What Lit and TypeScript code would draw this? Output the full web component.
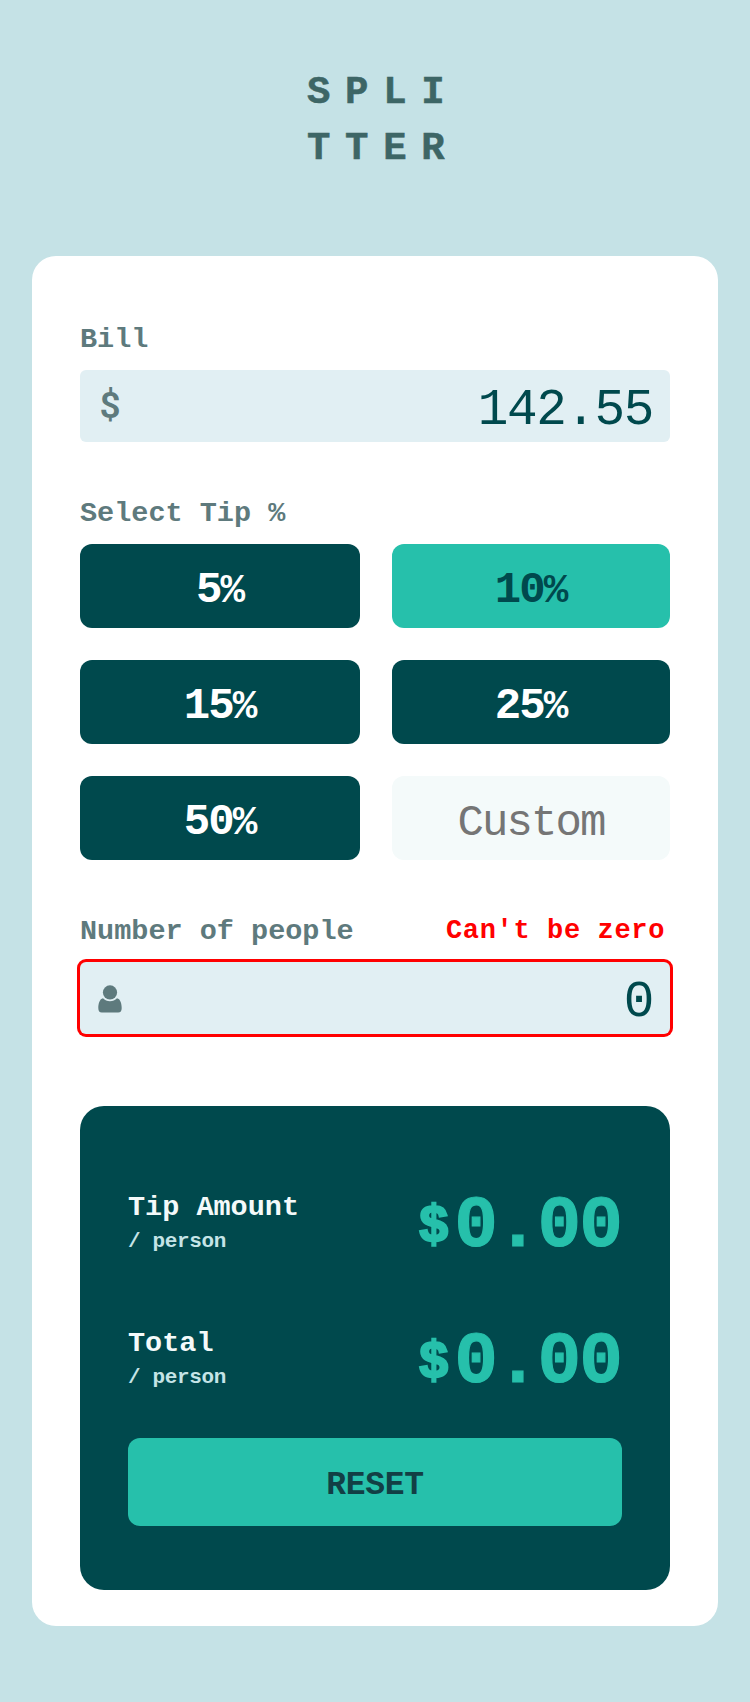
import { LitElement, html, css } from "lit";
import { customElement, property, state } from "lit/decorators.js";
import { classMap } from "lit/directives/class-map.js";

@customElement("result-row")
class ResultRow extends LitElement {
  @property() label = "";
  @property() amount = "0.00";

  static styles = css`
    :host { display: flex; justify-content: space-between; height: 66px; }
    .name { font-size: 28.5px; line-height: 40px; color: #f4fafa; white-space: pre; }
    .unit { font-size: 21px; letter-spacing: -0.36px; line-height: 24px; margin-top: 2px; color: #c5e4e7; }
    .amount {
      display: flex; margin-top: 6px; padding-right: 1px; line-height: 66px; font-size: 72px;
      letter-spacing: -1.6px; color: #26c0ab; -webkit-text-stroke: 1.2px #26c0ab;
    }
    .currency { font-size: 51px; letter-spacing: 0; width: 36px; line-height: 67px; -webkit-text-stroke-width: 2.4px; }
  `;

  render() {
    return html`
      <div>
        <div class="name">${this.label}</div>
        <div class="unit">/ person</div>
      </div>
      <div class="amount"><span class="currency">$</span><span>${this.amount}</span></div>
    `;
  }
}

@customElement("app-root")
class AppRoot extends LitElement {
  @state() private tip = 10;
  @state() private bill = "142.55";
  @state() private people = "0";

  static styles = css`
    :host {
      display: block; min-height: 1702px; box-sizing: border-box; padding: 65px 32px 76px;
      background: #c5e2e6; font-family: "Liberation Mono", monospace; font-weight: 700;
    }
    * { box-sizing: border-box; }
    .logo {
      margin: 0 0 79px; padding-left: 275px; font-size: 39px; line-height: 56px;
      letter-spacing: 14.7px; color: #3d6666; -webkit-text-stroke: 0.5px #3d6666;
    }
    .logo span { display: block; }
    .card { background: #fff; border-radius: 24px; padding: 64px 48px 36px; }
    .head { display: flex; justify-content: space-between; height: 40px; margin-bottom: 10px; }
    .label { font-size: 28.5px; line-height: 40px; color: #5e7a7d; }
    .error { font-size: 27px; line-height: 38px; letter-spacing: 0.64px; color: #f00; padding-right: 5px; }
    .field {
      display: flex; align-items: center; height: 72px; border-radius: 6px;
      background: #e1eff3; padding: 0 17px 0 18px; margin-bottom: 52px;
    }
    .field.invalid { box-shadow: 0 0 0 3px #f00; margin-bottom: 72px; }
    .icon { flex: none; width: 24px; color: #5e7a7d; }
    .dollar { font: 600 37px/72px Roboto, sans-serif; text-align: center; }
    .person { display: block; height: 28px; margin-top: 1px; fill: currentColor; }
    input, button { font-family: inherit; border: 0; outline: 0; margin: 0; min-width: 0; }
    .field input {
      flex: 1; height: 72px; padding: 8px 0 0; background: none; text-align: right;
      font-size: 51px; letter-spacing: -1.4px; color: #00494d;
    }
    .tips { display: grid; grid-template-columns: 280px 278px; gap: 32px; margin-bottom: 52px; }
    .tip {
      height: 84px; border-radius: 12px; padding: 8px 0 0; text-align: center;
      font-size: 44px; font-weight: 700; letter-spacing: -1.9px; color: #fff; background: #00494d;
    }
    .tip.active { background: #26c0ab; color: #00494d; }
    .sign { font-size: 41px; letter-spacing: -1px; }
    .custom { font-weight: 400; background: #f4fafa; width: 100%; padding-top: 10px; }
    .custom::placeholder { color: #757575; opacity: 1; }
    .results { background: #00494d; border-radius: 24px; padding: 82px 48px 64px; }
    .rows { display: grid; gap: 70px; margin-bottom: 48px; }
    .reset {
      display: block; width: 100%; height: 88px; border-radius: 12px; padding: 6px 0 0;
      background: #26c0ab; color: #123f45; font-size: 33px; font-weight: 700; letter-spacing: -0.3px;
    }
  `;

  render() {
    return html`
      <h1 class="logo"><span>SPLI</span><span>TTER</span></h1>
      <main class="card">
        <div class="head"><label class="label">Bill</label></div>
        <div class="field">
          <span class="icon dollar">$</span>
          <input .value=${this.bill} @input=${(e: any) => (this.bill = e.target.value)} />
        </div>

        <div class="head"><span class="label">Select Tip %</span></div>
        <div class="tips">
          ${[5, 10, 15, 25, 50].map(
            (t) => html`<button
              class=${classMap({ tip: true, active: t === this.tip })}
              @click=${() => (this.tip = t)}
            >${t}<span class="sign">%</span></button>`
          )}
          <input class="tip custom" placeholder="Custom" />
        </div>

        <div class="head">
          <label class="label">Number of people</label>
          <span class="error">Can't be zero</span>
        </div>
        <div class="field invalid">
          <svg class="icon person" viewBox="0 0 24 28">
            <path d="M5 13.200C6.800 15.200 9.200 16.200 12 16.200s5.200-1 7-3C22.300 13.700 23.700 18.500 23.700 23c0 3-1.200 4.500-3.500 4.500H3.800C1.500 27.500.3 26 .3 23c0-4.500 1.400-9.300 4.700-9.800z" />
            <circle cx="12" cy="7.400" r="7.100" />
          </svg>
          <input .value=${this.people} @input=${(e: any) => (this.people = e.target.value)} />
        </div>

        <section class="results">
          <div class="rows">
            <result-row label="Tip Amount"></result-row>
            <result-row label="Total"></result-row>
          </div>
          <button class="reset">RESET</button>
        </section>
      </main>
    `;
  }
}
